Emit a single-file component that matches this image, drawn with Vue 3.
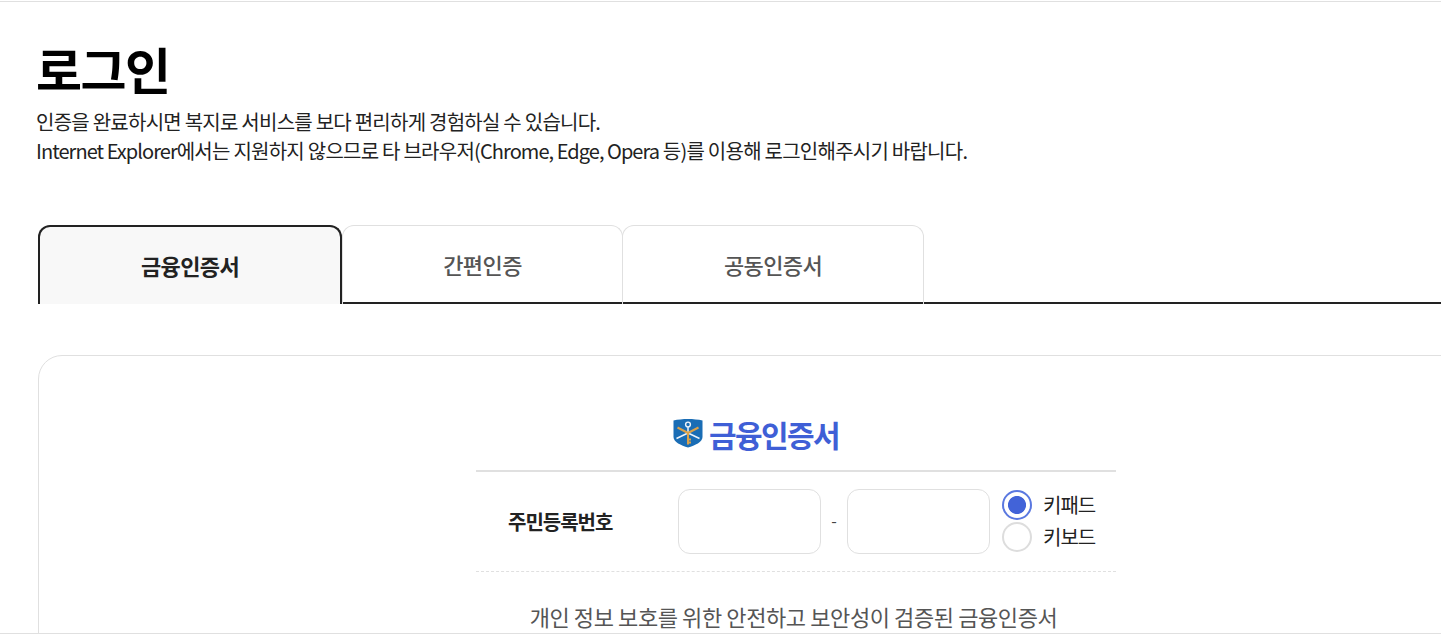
<template>
  <div class="page">
    <div class="frame">
      <main class="content">
        <h1 class="title">로그인</h1>
        <p class="desc">인증을 완료하시면 복지로 서비스를 보다 편리하게 경험하실 수 있습니다.</p>
        <p class="desc"><span class="latin">Internet Explorer</span>에서는 지원하지 않으므로 타 브라우저(<span class="latin">Chrome, Edge, Opera</span> 등)를 이용해 로그인해주시기 바랍니다.</p>

        <div class="tabs">
          <button
            v-for="tab in tabs"
            :key="tab.label"
            class="tab"
            :class="[tab.size, { active: tab.label === current }]"
            @click="current = tab.label"
          >
            {{ tab.label }}
          </button>
        </div>

        <section class="panel">
          <h2 class="cert-title">
            <svg class="shield" viewBox="0 0 30 30" width="30" height="30" aria-hidden="true">
              <path d="M0.5 2.5C9 0.5 21 0.5 29.5 2.5V19C29.5 24 22 27.5 15 29.5C8 27.5 0.5 24 0.5 19Z" fill="#1a6db5" />
              <path d="M15 15L3.5 20.5M15 15L26.5 20.5M15 9V15" stroke="#eef3f9" stroke-width="1.5" fill="none" />
              <circle cx="15" cy="6.5" r="2.4" fill="none" stroke="#eef3f9" stroke-width="1.4" />
              <path d="M4.5 9.5L15 15L25.5 9.5M15 15V26.5M15 21.5H18M15 24.5H18" stroke="#dca24a" stroke-width="2" fill="none" />
            </svg>
            금융인증서
          </h2>
          <div class="form-row">
            <label class="row-label">주민등록번호</label>
            <div class="inputs">
              <input class="rrn" type="text" />
              <span class="dash">-</span>
              <input class="rrn" type="password" />
            </div>
            <div class="radios">
              <label v-for="opt in inputTypes" :key="opt" class="radio-line" @click="inputType = opt">
                <span class="radio" :class="{ on: inputType === opt }"></span>
                <span>{{ opt }}</span>
              </label>
            </div>
          </div>
          <p class="notice">개인 정보 보호를 위한 안전하고 보안성이 검증된 금융인증서</p>
        </section>
      </main>
    </div>
  </div>
</template>

<script setup>
import { ref } from 'vue'

const tabs = [
  { label: '금융인증서', size: 'wide' },
  { label: '간편인증', size: 'mid' },
  { label: '공동인증서', size: 'last' },
]
const inputTypes = ['키패드', '키보드']

const current = ref('금융인증서')
const inputType = ref('키패드')
</script>

<style>
html,
body {
  margin: 0;
  overflow: hidden;
  background: #fff;
}
</style>

<style scoped>
.page {
  height: 638px;
  padding-top: 1px;
  box-sizing: border-box;
  overflow: hidden;
  font-family: "Noto Sans CJK KR", "Noto Sans", sans-serif;
  color: #222;
}

/* the visible area is cut off at the bottom line */
.frame {
  height: 633px;
  box-sizing: border-box;
  border-top: 1px solid #e0e0e0;
  border-bottom: 1px solid #e0e0e0;
  overflow: hidden;
}

.content {
  padding: 32px 0 0 36px;
}

.title {
  margin: 0 0 5px;
  font-size: 50px;
  line-height: 68px;
  font-weight: 700;
  color: #000;
  letter-spacing: -1.5px;
}

.desc {
  margin: 0;
  font-size: 20px;
  line-height: 29px;
  letter-spacing: -0.75px;
  color: #222;
}

.latin {
  letter-spacing: -0.95px;
}

.tabs {
  display: flex;
  margin: 60px 0 0 2px;
  height: 79px;
  border-bottom: 2px solid #222;
  box-sizing: border-box;
}

.tab {
  height: 79px;
  flex: none;
  box-sizing: border-box;
  padding: 0 0 2px;
  border: 1px solid #e0e0e0;
  border-bottom: 0;
  border-radius: 12px 12px 0 0;
  background: transparent;
  font: 500 22px "Noto Sans CJK KR", sans-serif;
  letter-spacing: -0.6px;
  color: #555;
}

.tab.wide {
  width: 304px;
}

.tab.mid {
  width: 281px;
}

.tab.last {
  width: 302px;
  margin-left: -1px;
}

.tab.active {
  border: 2px solid #222;
  border-bottom: 0;
  background: #f8f8f8;
  font-weight: 700;
  color: #222;
  position: relative;
}

.panel {
  margin: 51px 0 0 2px;
  padding: 55px 0 0;
  border: 1px solid #e0e0e0;
  border-radius: 24px;
  width: 1500px;
  height: 400px;
  box-sizing: border-box;
}

.cert-title {
  width: 640px;
  box-sizing: border-box;
  margin: 0 0 0 437px;
  padding: 0 80px 13px 0;
  display: flex;
  justify-content: center;
  align-items: center;
  gap: 6px;
  font-size: 30px;
  line-height: 46px;
  font-weight: 700;
  letter-spacing: -1.6px;
  color: #3f5fd6;
  border-bottom: 2px solid #e0e0e0;
}

.shield {
  margin-top: -2px;
}

.form-row {
  width: 640px;
  height: 100px;
  margin-left: 437px;
  box-sizing: border-box;
  display: flex;
  align-items: center;
  border-bottom: 1px dashed #e0e0e0;
}

.row-label {
  width: 202px;
  padding-left: 32px;
  box-sizing: border-box;
  font-size: 20px;
  font-weight: 700;
  letter-spacing: -1px;
  color: #222;
}

.inputs {
  display: flex;
  align-items: center;
}

.rrn {
  width: 143px;
  height: 65px;
  box-sizing: border-box;
  border: 1px solid #e0e0e0;
  border-radius: 12px;
  background: #fff;
}

.dash {
  width: 26px;
  padding-bottom: 4px;
  text-align: center;
  font-size: 16px;
  color: #444;
}

.radios {
  margin: -2px 0 0 12px;
  display: flex;
  flex-direction: column;
  gap: 2px;
}

.radio-line {
  display: flex;
  align-items: center;
  gap: 11px;
  height: 30px;
  font-size: 20px;
  letter-spacing: -1px;
  color: #222;
}

.radio {
  width: 30px;
  height: 30px;
  box-sizing: border-box;
  border: 2px solid #ddd;
  border-radius: 50%;
  background: #fff;
}

.radio.on {
  border-color: #5a78e0;
  background: radial-gradient(circle, #4263d8 0 8.6px, #fff 9.4px);
}

.notice {
  margin: 28px 0 0 437px;
  width: 640px;
  box-sizing: border-box;
  padding-right: 5px;
  text-align: center;
  font-size: 22px;
  line-height: 32px;
  letter-spacing: -0.4px;
  color: #555;
}
</style>
